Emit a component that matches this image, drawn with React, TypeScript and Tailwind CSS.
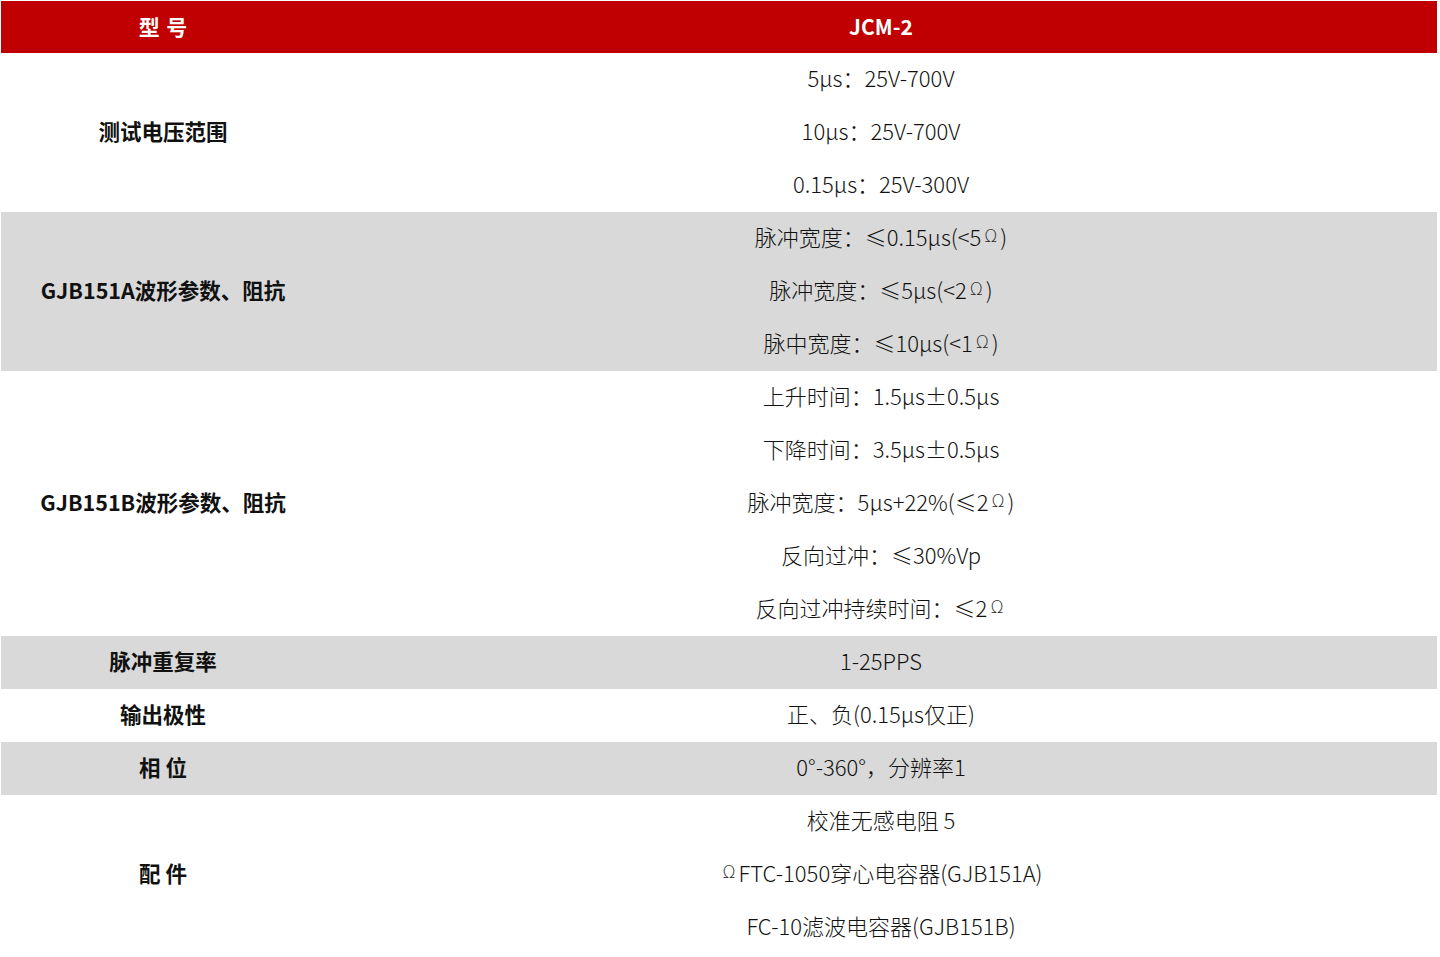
import React from 'react'

const Om = () => <span className="text-[17px] text-[#2a2a2a] mx-[3px] font-['DejaVu_Sans']">Ω</span>

type Row = { label: string; lines: React.ReactNode[]; gray?: boolean }

const rows: Row[] = [
  { label: '测试电压范围', lines: ['5μs：25V-700V', '10μs：25V-700V', '0.15μs：25V-300V'] },
  {
    label: 'GJB151A波形参数、阻抗',
    gray: true,
    lines: [
      <>脉冲宽度：≤0.15μs(&lt;5<Om />)</>,
      <>脉冲宽度：≤5μs(&lt;2<Om />)</>,
      <>脉中宽度：≤10μs(&lt;1<Om />)</>,
    ],
  },
  {
    label: 'GJB151B波形参数、阻抗',
    lines: [
      '上升时间：1.5μs±0.5μs',
      '下降时间：3.5μs±0.5μs',
      <>脉冲宽度：5μs+22%(≤2<Om />)</>,
      '反向过冲：≤30%Vp',
      <>反向过冲持续时间：≤2<Om /></>,
    ],
  },
  { label: '脉冲重复率', gray: true, lines: ['1-25PPS'] },
  { label: '输出极性', lines: ['正、负(0.15μs仅正)'] },
  { label: '相 位', gray: true, lines: ['0°-360°，分辨率1'] },
  {
    label: '配 件',
    lines: [
      '校准无感电阻 5',
      <><Om />FTC-1050穿心电容器(GJB151A)</>,
      'FC-10滤波电容器(GJB151B)',
    ],
  },
]

export default function App() {
  return (
    <div className="w-[1440px] h-[957px] bg-white pt-px pl-px font-['Noto_Sans_CJK_SC',sans-serif] text-[#111]">
      <div className="w-[1436px]">
        <div className="flex h-[52px] bg-[#c00000] text-white font-bold text-[21px]">
          <div className="w-[324px] flex items-center justify-center tracking-[0.3em] pl-[0.3em]">型号</div>
          <div className="flex-1 flex items-center justify-center">JCM-2</div>
        </div>
        {rows.map((r, i) => (
          <div key={i} className={'flex ' + (r.gray ? 'bg-[#d9d9d9]' : 'bg-white')}>
            <div className="w-[324px] flex items-center justify-center font-bold text-[21.5px] pb-[2px]">{r.label}</div>
            <div className="flex-1 flex flex-col">
              {r.lines.map((l, j) => (
                <div key={j} className="h-[53px] flex items-center justify-center text-[22px] font-light pb-[4px]">
                  {l}
                </div>
              ))}
            </div>
          </div>
        ))}
      </div>
    </div>
  )
}
